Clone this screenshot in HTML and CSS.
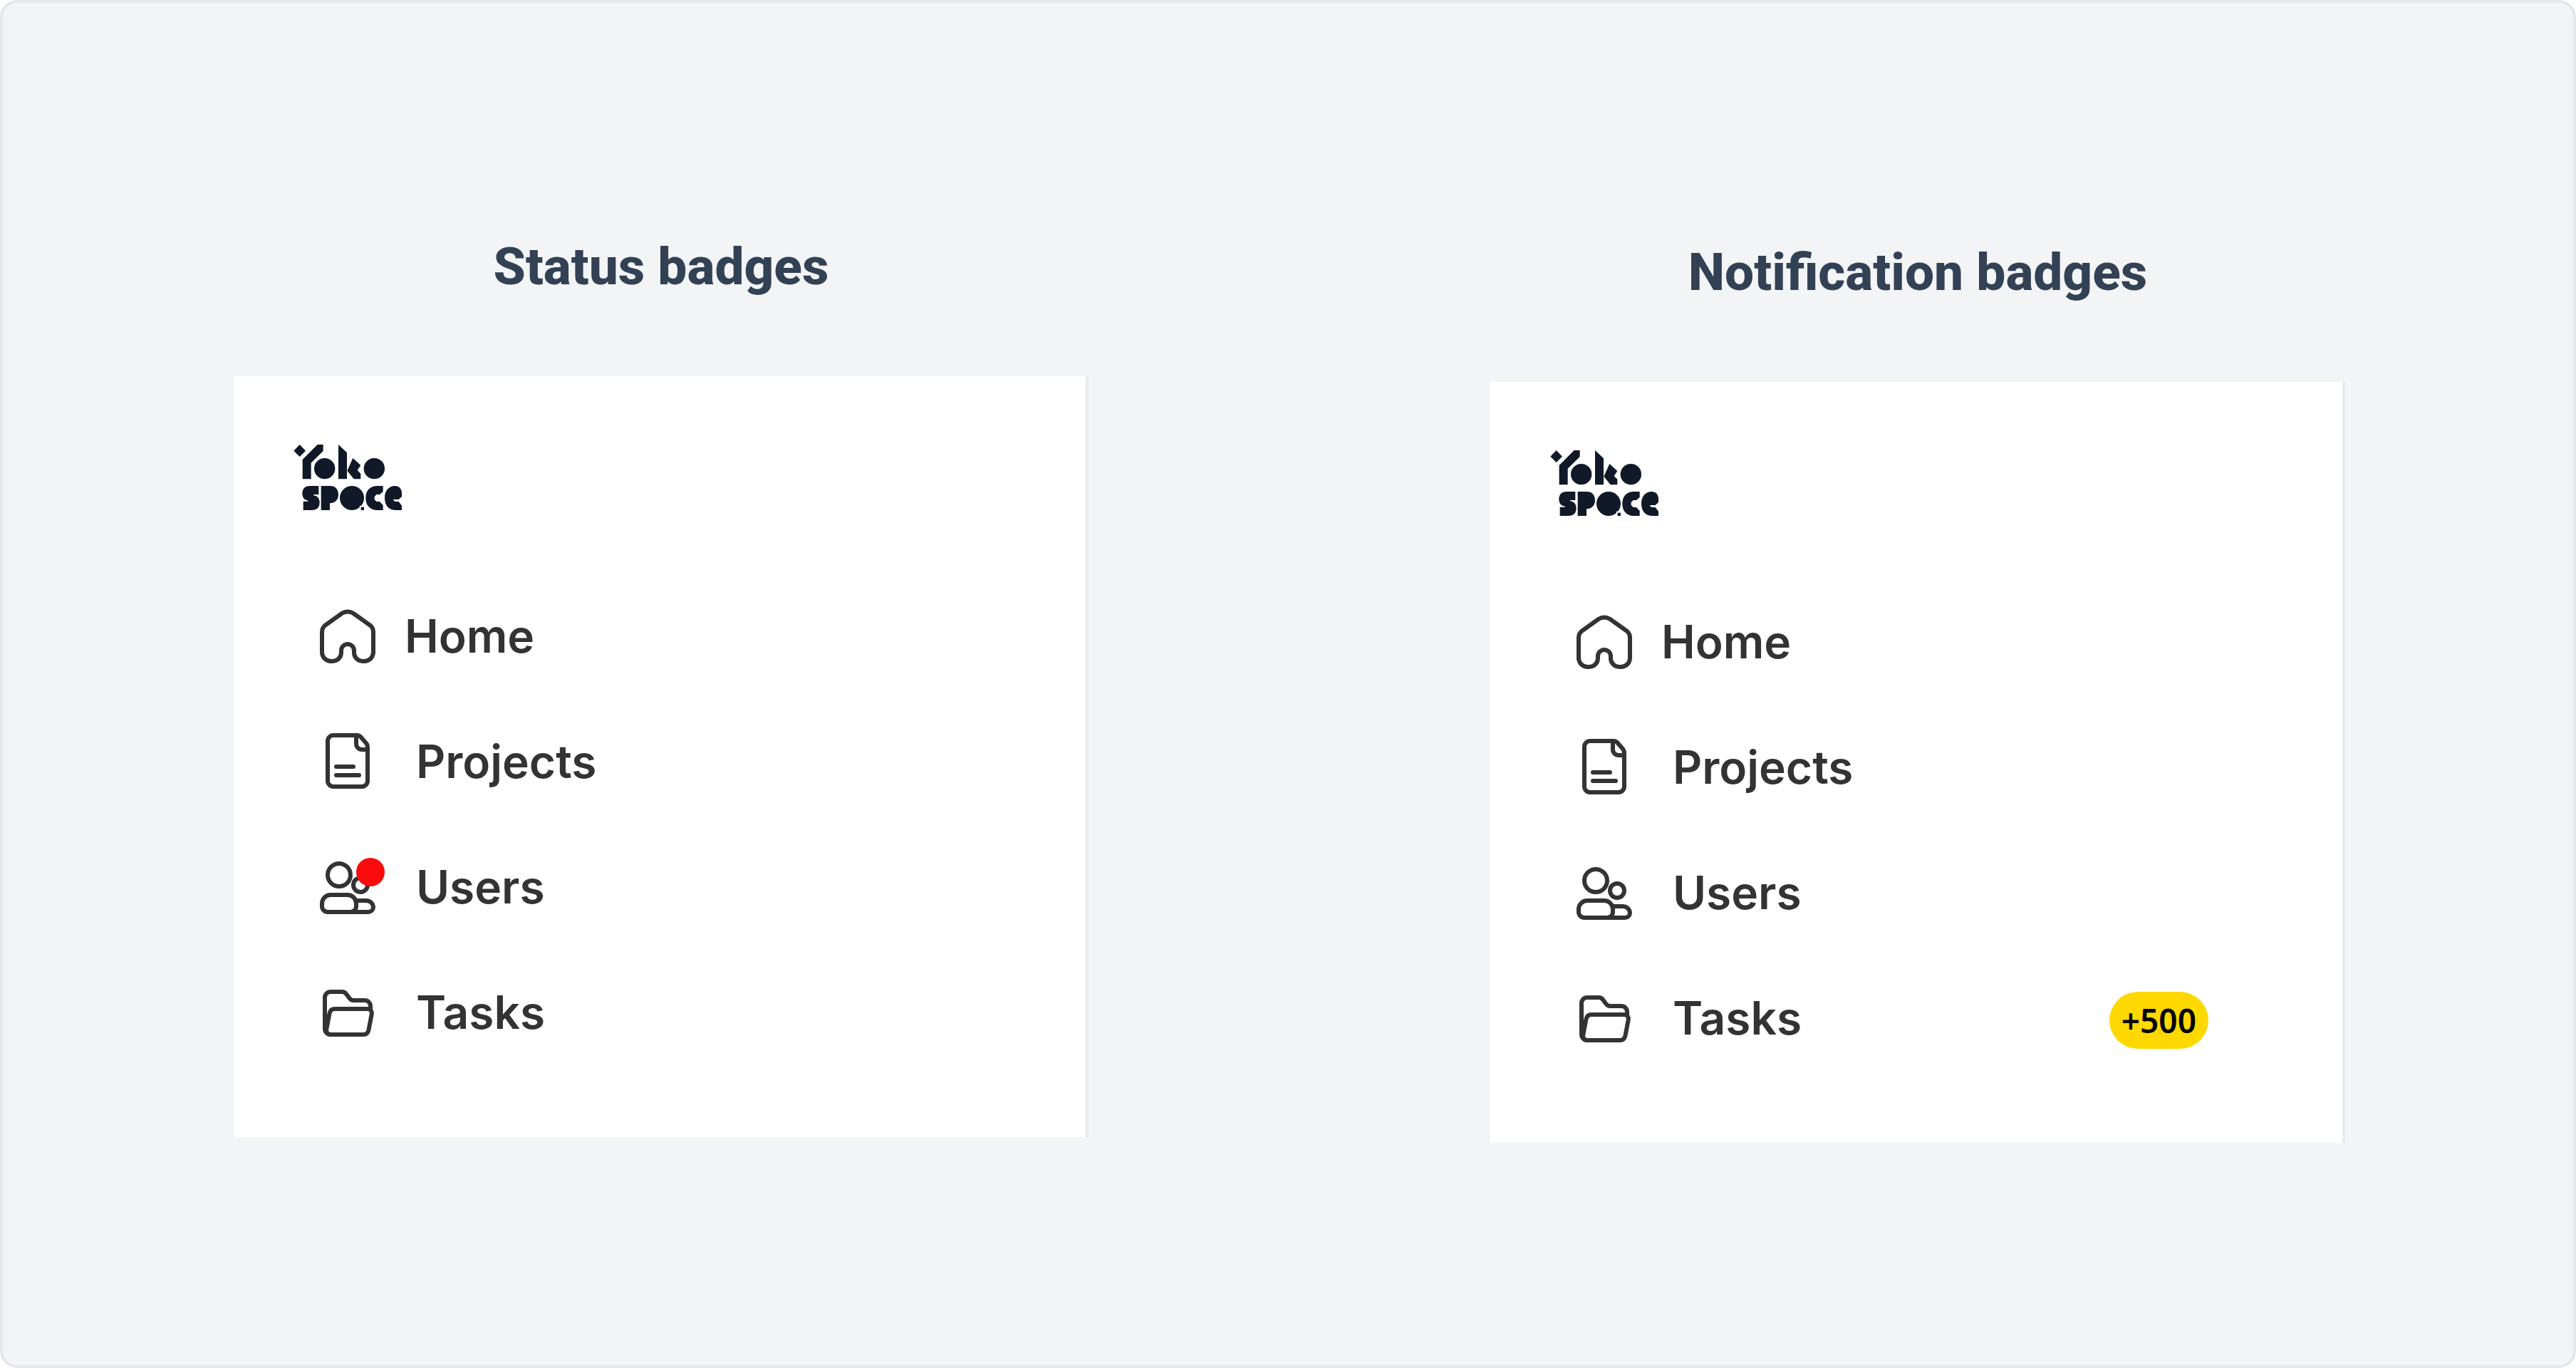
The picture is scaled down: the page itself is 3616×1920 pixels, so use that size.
FILE: index.html
```html
<!DOCTYPE html>
<html lang="en">
<head>
  <meta charset="utf-8">
  <title>Badges</title>
  <link rel="stylesheet" href="styles.css">
</head>
<body>
  <svg class="sprite" aria-hidden="true">
    <symbol id="logo" viewBox="36 42 456 276">
      <path d="M62 42 87 68 62 93 37 68Z"/>
      <path d="M74 187V105L137 42H161V69L110 119V187Z"/>
      <circle cx="167" cy="143" r="44"/>
      <path d="M225 42 261 76V187H225Z"/>
      <path d="M286 99 319 129 305 150 319 164V187H290L262 152Z"/>
      <circle cx="376" cy="143" r="44"/>
      <path d="M105 216H142V252H120V256C135 257 146 268 146 286C146 307 135 318 112 318H77V281H98V278C85 275 73 268 73 248C73 228 85 216 105 216Z"/>
      <path d="M152 216H190C212 216 225 230 225 252S212 288 189 289V318H152Z"/>
      <circle cx="282" cy="267" r="51"/>
      <path d="M317 318V302H333" fill="none" stroke="#fff" stroke-width="5"/>
      <path d="M320 305H333V318H320Z"/>
      <path d="M413 216V240L399 252H386L377 261V273L386 282H399L413 297V318H389C358 318 340 298 340 267S358 216 389 216Z"/>
      <path d="M463 216C481 216 492 228 492 246V261L479 273H456V275L464 282H479L492 299V318H468C438 318 420 298 420 266C420 236 438 216 463 216Z"/>
    </symbol>
    <symbol id="home" viewBox="0 0 96 96">
      <path d="M12 42C12 38 14 34.500 17 32.200L40.500 15.500C45 13 51 13 55.500 15.500L79 32.200C82 34.500 84 38 84 42V70A12.500 12.500 0 0 1 71.500 83H69A12 12 0 0 1 57 71V68A9 9 0 0 0 39 68V71A12 12 0 0 1 27 83H24.500A12.500 12.500 0 0 1 12 70Z"/>
    </symbol>
    <symbol id="file" viewBox="0 0 96 96">
      <path d="M28 11H61A7 7 0 0 1 66.500 13.500L73.500 21.500A9 9 0 0 1 76 28V75A8 8 0 0 1 68 83H28A8 8 0 0 1 20 75V19A8 8 0 0 1 28 11Z"/>
      <path d="M60 11V23A8 8 0 0 0 68 31H76M32 55H56M32 67H64"/>
    </symbol>
    <symbol id="users" viewBox="0 0 96 96">
      <circle cx="36" cy="31" r="16"/>
      <circle cx="66" cy="45" r="10"/>
      <path d="M24 59H48A12 12 0 0 1 60 71V75A8 8 0 0 1 52 83H20A8 8 0 0 1 12 75V71A12 12 0 0 1 24 59Z"/>
      <path d="M59 67H74A10 10 0 0 1 84 76A7 7 0 0 1 77 83H52"/>
    </symbol>
    <symbol id="folder" viewBox="0 0 96 96">
      <path d="M80 43V39A8 8 0 0 0 72 31H56C53.500 31 52 30 50.500 28L46 22C44.500 20 43 19 40.500 19H24A8 8 0 0 0 16 27V71A8 8 0 0 0 24 79"/>
      <path d="M30 43H76C80 43 82.500 46.500 81.700 50.500L77.500 72.500C76.700 76.500 74 79 70 79H24C20 79 17.500 75.500 18.300 71.500L22.500 49.500C23.300 45.500 26 43 30 43Z"/>
    </symbol>
  </svg>

  <main class="board">
    <section class="panel">
      <h2 class="panel-title">Status badges</h2>
      <div class="card">
        <svg class="logo" role="img" aria-label="Yoko Space"><use href="#logo"/></svg>
        <nav class="menu" aria-label="Status menu">
          <a class="menu-link menu-link-home" href="#"><span class="icon-box"><svg class="icon"><use href="#home"/></svg></span>Home</a>
          <a class="menu-link" href="#"><span class="icon-box"><svg class="icon"><use href="#file"/></svg></span>Projects</a>
          <a class="menu-link" href="#"><span class="icon-box"><svg class="icon"><use href="#users"/></svg><span class="status-dot"></span></span>Users</a>
          <a class="menu-link" href="#"><span class="icon-box"><svg class="icon"><use href="#folder"/></svg></span>Tasks</a>
        </nav>
      </div>
    </section>

    <section class="panel panel-lower">
      <h2 class="panel-title">Notification badges</h2>
      <div class="card">
        <svg class="logo" role="img" aria-label="Yoko Space"><use href="#logo"/></svg>
        <nav class="menu" aria-label="Notification menu">
          <a class="menu-link menu-link-home" href="#"><span class="icon-box"><svg class="icon"><use href="#home"/></svg></span>Home</a>
          <a class="menu-link" href="#"><span class="icon-box"><svg class="icon"><use href="#file"/></svg></span>Projects</a>
          <a class="menu-link" href="#"><span class="icon-box"><svg class="icon"><use href="#users"/></svg></span>Users</a>
          <a class="menu-link" href="#"><span class="icon-box"><svg class="icon"><use href="#folder"/></svg></span>Tasks<span class="count">+500</span></a>
        </nav>
      </div>
    </section>
  </main>
</body>
</html>
```
FILE: styles.css
```css
* {
  box-sizing: border-box;
}

body {
  margin: 0;
  background: #fff;
  font-family: Inter, "Liberation Sans", sans-serif;
}

.sprite {
  display: none;
}

.board {
  display: grid;
  grid-template-columns: 1fr 1fr;
  align-items: start;
  gap: 564px;
  min-height: 100vh;
  padding: 324px 320px 240px 324px;
  background: #f3f4f6;
  border: 4px solid #e5e7eb;
  border-radius: 24px;
}

.panel-lower {
  padding-top: 8px;
}

.panel-title {
  margin: 0 0 108px;
  color: #334155;
  font-family: Roboto, "Open Sans", sans-serif;
  font-size: 73px;
  font-weight: 800;
  line-height: 92px;
  text-align: center;
}

.card {
  padding: 96px 128px 127px 84px;
  background: #fff;
  border-right: 4px solid #e9ebee;
}

.logo {
  display: block;
  width: 152px;
  height: 92px;
  margin-bottom: 129px;
  fill: #111827;
}

.menu {
  display: flex;
  flex-direction: column;
  gap: 80px;
  padding: 0 60px 0 28px;
}

.menu-link {
  display: flex;
  align-items: center;
  gap: 48px;
  color: #333;
  font-size: 64px;
  font-weight: 600;
  line-height: 96px;
  text-decoration: none;
}

.menu-link-home {
  gap: 32px;
}

.icon-box {
  position: relative;
  width: 96px;
  height: 96px;
}

.icon {
  display: block;
  width: 96px;
  height: 96px;
  fill: none;
  stroke: #333;
  stroke-width: 6px;
  stroke-linecap: round;
  stroke-linejoin: round;
}

.status-dot {
  position: absolute;
  top: 7px;
  right: -4px;
  width: 40px;
  height: 40px;
  background: #f90b0c;
  border-radius: 50%;
}

.count {
  align-self: flex-end;
  margin: 0 0 5px auto;
  padding: 0 17px;
  color: #000;
  background: #ffd800;
  border-radius: 40px;
  font-family: "Noto Sans", sans-serif;
  font-size: 46px;
  font-weight: 600;
  line-height: 80px;
}
```
